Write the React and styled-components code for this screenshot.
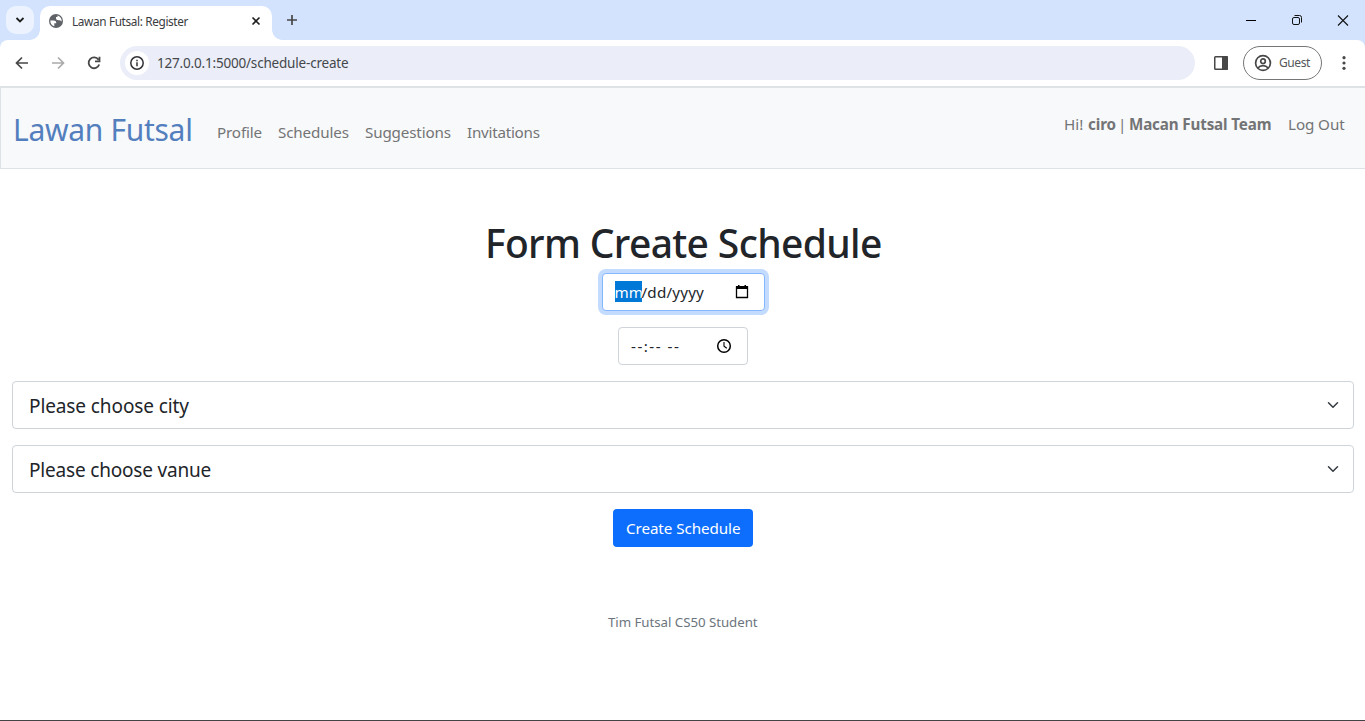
import React from "react";
import styled, { createGlobalStyle } from "styled-components";

const Global = createGlobalStyle`
  * { box-sizing: border-box; }
  html, body { margin: 0; background: #fff; overflow: hidden; }
  body { font-family: "Noto Sans", "Open Sans", sans-serif; color: #212529; }
  svg { display: block; flex: none; }
`;

const Window = styled.div`
  height: 721px;
  display: flex;
  flex-direction: column;
  border-bottom: 1px solid #424345;
  overflow: hidden;
`;

const Label = styled.span`
  display: block;
  flex: none;
  white-space: nowrap;
  width: ${(p) => p.$w}px;
  font-size: ${(p) => p.$size}px;
  font-weight: ${(p) => p.$weight || 400};
  letter-spacing: ${(p) => p.$ls || 0}px;
  line-height: ${(p) => p.$lh || 20}px;
  color: ${(p) => p.$color || "inherit"};
`;

const TabStrip = styled.div`
  height: 40px;
  flex: none;
  display: flex;
  background: #d3e3fd;
`;

const TabSearch = styled.div`
  width: 28px;
  height: 28px;
  margin: 6px 6px 0;
  border-radius: 10px;
  background: #ecf2fe;
  display: flex;
  align-items: center;
  justify-content: center;
`;

const Tab = styled.div`
  position: relative;
  width: 232px;
  height: 34px;
  margin-top: 6px;
  padding: 0 10px 5px 8px;
  border-radius: 10px 10px 0 0;
  background: #fff;
  display: flex;
  align-items: center;
  gap: 8px;
  &::before, &::after {
    content: "";
    position: absolute;
    bottom: 0;
    width: 10px;
    height: 10px;
  }
  &::before { left: -10px; background: radial-gradient(circle at 0 0, transparent 9.5px, #fff 10px); }
  &::after { right: -10px; background: radial-gradient(circle at 100% 0, transparent 9.5px, #fff 10px); }
`;

const TabClose = styled.div`
  margin-left: auto;
`;

const NewTab = styled.div`
  margin: 14px 0 0 14px;
`;

const WindowControls = styled.div`
  margin-left: auto;
  display: flex;
  & > svg { width: 46px; height: 40px; }
`;

const ToolbarBack = styled.div`
  flex: none;
  background: #d3e3fd;
`;

const Toolbar = styled.div`
  height: 46px;
  display: flex;
  align-items: center;
  background: #fff;
  border-radius: 8px 8px 0 0;
  padding-left: 4px;
`;

const ToolButton = styled.div`
  width: 36px;
  height: 34px;
  display: flex;
  align-items: center;
  justify-content: center;
`;

const AddressBar = styled.div`
  width: 1075px;
  height: 34px;
  margin-left: 8px;
  padding: 0 5px;
  border-radius: 17px;
  background: #ebeef8;
  display: flex;
  align-items: center;
  gap: 8px;
`;

const SiteInfo = styled.div`
  width: 24px;
  height: 24px;
  border-radius: 50%;
  background: #fff;
  display: flex;
  align-items: center;
  justify-content: center;
`;

const SidePanel = styled.div`
  margin-left: 17px;
`;

const GuestChip = styled.div`
  width: 79px;
  height: 34px;
  margin-left: 13px;
  padding-left: 10px;
  border: 1px solid #747775;
  border-radius: 17px;
  display: flex;
  align-items: center;
  gap: 7px;
`;

const MenuDots = styled.div`
  margin-left: 13px;
`;

const Divider = styled.div`
  height: 1px;
  flex: none;
  background: #dfe2e3;
`;

const Navbar = styled.nav`
  height: 82px;
  flex: none;
  display: flex;
  border: 1px solid #dee2e6;
  border-right: 0;
  background: #f8f9fa;
  color: #737476;
  padding-left: 12px;
`;

const Brand = styled.div`
  width: 204px;
  padding-top: 22px;
`;

const NavLinks = styled.div`
  display: flex;
  gap: 16px;
  padding-top: 32px;
`;

const NavUser = styled.div`
  display: flex;
  margin-left: auto;
  padding: 26px 19px 0 0;
`;

const Form = styled.main`
  flex: 1;
  display: flex;
  flex-direction: column;
  align-items: center;
  padding: 50px 11px 0 12px;
`;

const Title = styled.h1`
  margin: 0;
  height: 54px;
`;

const Field = styled.div`
  width: ${(p) => p.$width}px;
  height: 38px;
  margin-bottom: 16px;
  padding: 0 ${(p) => p.$right}px 0 12px;
  display: flex;
  align-items: center;
  justify-content: space-between;
  border: 1px solid ${(p) => (p.$focused ? "#86b7fe" : "#ced4da")};
  border-radius: 4px;
  background: #fff;
  box-shadow: ${(p) => (p.$focused ? "0 0 0 4px #c2dbff" : "none")};
`;

const DateText = styled.div`
  display: flex;
  margin-top: -1px;
  & > * { height: 21px; }
  span { line-height: 22px; }
`;

const Selected = styled.div`
  background: #0078d7;
  color: #fff;
`;

const Select = styled.div`
  align-self: stretch;
  height: 48px;
  margin-bottom: 16px;
  padding: 0 14px 0 16px;
  display: flex;
  align-items: center;
  justify-content: space-between;
  border: 1px solid #ced4da;
  border-radius: 4px;
  & > span { padding-top: 1px; }
`;

const Submit = styled.button`
  width: 140px;
  height: 38px;
  padding: 0 0 0 13px;
  border: 0;
  border-radius: 4px;
  background: #0d6efd;
  color: #fff;
  font-family: inherit;
  text-align: left;
`;

const Footer = styled.footer`
  margin-top: 65px;
`;

const Chevron = () => (
  <svg width="12" height="12" viewBox="0 0 16 16" fill="none" stroke="#343a40" strokeWidth="2" strokeLinecap="round" strokeLinejoin="round">
    <path d="m2 5 6 6 6-6" />
  </svg>
);

const Globe = () => (
  <svg width="16" height="16" viewBox="0 0 16 16">
    <circle cx="8" cy="8" r="7" fill="#5f6368" />
    <path d="M2.3 7.5h3.2c1.8 0 2.7.8 2.7 2.1v.7H6.3v3C3.8 12.600 2.200 10.300 2.300 7.500ZM9.500 2.600c2.500.6 4.200 2.800 4.200 5.400v.5c-.8-.9-1.700-1.300-3-1.300-1.900 0-2.700-.7-2.700-2.200V4h1.500Z" fill="#fff" />
  </svg>
);

const Arrow = ({ color, flip }) => (
  <svg width="14" height="14" viewBox="0 0 14 14" fill="none" stroke={color} strokeWidth="1.7">
    <path d={flip ? "M1 7h11M7 1.500 12.500 7 7 12.500" : "M13 7H2M7 1.500 1.500 7 7 12.500"} />
  </svg>
);

export default function App() {
  return (
    <>
      <Global />
      <Window>
        <TabStrip>
          <TabSearch>
            <svg width="10" height="8" fill="none" stroke="#1f1f1f" strokeWidth="1.8"><path d="m1.500 2 3.500 3.500L8.500 2" /></svg>
          </TabSearch>
          <Tab>
            <Globe />
            <Label $w={118} $size={11.8} $ls={-0.36} $color="#3a3c40">Lawan Futsal: Register</Label>
            <TabClose>
              <svg width="12" height="12" fill="none" stroke="#1f1f1f" strokeWidth="1.6"><path d="m2.500 2.500 7 7m0-7-7 7" /></svg>
            </TabClose>
          </Tab>
          <NewTab>
            <svg width="12" height="12" fill="none" stroke="#474747" strokeWidth="1.700"><path d="M6 1v10M1 6h10" /></svg>
          </NewTab>
          <WindowControls>
            <svg viewBox="0 0 46 40" stroke="#000"><path d="M19 20.500h10" /></svg>
            <svg viewBox="0 0 46 40" fill="none" stroke="#111"><rect x="19.500" y="17.500" width="7" height="7" rx="1.500" /><path d="M21.500 15.500h5a2 2 0 0 1 2 2v5" /></svg>
            <svg viewBox="0 0 46 40" fill="none" stroke="#111" strokeWidth="1.100"><path d="m19 15.500 10 10m0-10-10 10" /></svg>
          </WindowControls>
        </TabStrip>
        <ToolbarBack>
          <Toolbar>
            <ToolButton><Arrow color="#474747" /></ToolButton>
            <ToolButton><Arrow color="#aaa" flip /></ToolButton>
            <ToolButton>
              <svg width="14" height="14" viewBox="0 0 14 14" fill="none" stroke="#474747" strokeWidth="1.800"><path d="M11.500 3.700A5.400 5.400 0 1 0 12.200 8.500M12.500.800v4.500H8" /></svg>
            </ToolButton>
            <AddressBar>
              <SiteInfo>
                <svg width="14" height="14" viewBox="0 0 14 14" fill="none" stroke="#303236" strokeWidth="1.500"><circle cx="7" cy="7" r="6.200" /><path d="M7 6.300V10.200M7 3.700v1.500" /></svg>
              </SiteInfo>
              <Label $w={200} $size={13.500} $ls={-0.19} $color="#44474c">127.0.0.1:5000/schedule-create</Label>
            </AddressBar>
            <SidePanel>
              <svg width="18" height="16" viewBox="0 0 18 16"><rect x="2.750" y="1.750" width="12.500" height="12.500" rx="0.800" fill="none" stroke="#474747" strokeWidth="1.500" /><path d="M10 1h5a1 1 0 0 1 1 1v12a1 1 0 0 1-1 1h-5Z" fill="#474747" /></svg>
            </SidePanel>
            <GuestChip>
              <svg width="18" height="18" viewBox="0 0 18 18" fill="none" stroke="#474747" strokeWidth="1.700"><circle cx="9" cy="9" r="7.400" /><circle cx="9" cy="7.200" r="2.300" /><path d="M3.800 14c1.300-1.500 3-2.300 5.200-2.300s3.900.8 5.200 2.300" /></svg>
              <Label $w={32} $size={12} $ls={-0.4} $color="#55575a">Guest</Label>
            </GuestChip>
            <MenuDots>
              <svg width="18" height="16" fill="#474747"><circle cx="9" cy="2.700" r="1.600" /><circle cx="9" cy="8" r="1.600" /><circle cx="9" cy="13.300" r="1.600" /></svg>
            </MenuDots>
          </Toolbar>
        </ToolbarBack>
        <Divider />
        <Navbar>
          <Brand><Label $w={178} $size={30} $ls={-0.3} $lh={40} $color="#537fbe">Lawan Futsal</Label></Brand>
          <NavLinks>
            <Label $w={45} $size={15.200} $ls={-0.15} $lh={24}>Profile</Label>
            <Label $w={71} $size={15.200} $ls={-0.13} $lh={24}>Schedules</Label>
            <Label $w={86} $size={15.200} $ls={-0.15} $lh={24}>Suggestions</Label>
            <Label $w={73} $size={15.200} $ls={-0.25} $lh={24}>Invitations</Label>
          </NavLinks>
          <NavUser>
            <Label $w={24} $size={15.200}>Hi!</Label>
            <Label $w={30} $size={15.200} $ls={-0.1} $weight={700}>ciro</Label>
            <Label $w={11} $size={15.200}>|</Label>
            <Label $w={159} $size={15.200} $ls={-0.15} $weight={700}>Macan Futsal Team</Label>
            <Label $w={58} $size={15.200} $ls={-0.08}>Log Out</Label>
          </NavUser>
        </Navbar>
        <Form>
          <Title><Label $w={396} $size={39} $ls={-0.65} $weight={500} $lh={48}>Form Create Schedule</Label></Title>
          <Field $width={163} $right={15} $focused>
            <DateText>
              <Selected><Label $w={27} $size={15.200}>mm</Label></Selected>
              <Label $w={64} $size={15.200} $ls={0.2}>/dd/yyyy</Label>
            </DateText>
            <svg width="14" height="16" viewBox="0 0 14 16"><path d="M1.500 3h11v10.500h-11Z" fill="none" stroke="#000" strokeWidth="1.300" /><path d="M1 2h12v3H1ZM3 1h1.500v2H3ZM9.500 1H11v2H9.500Z" /></svg>
          </Field>
          <Field $width={130} $right={15}>
            <Label $w={50} $size={15.200} $ls={1.5}>--:-- --</Label>
            <svg width="16" height="16" viewBox="0 0 16 16" fill="none" stroke="#000" strokeWidth="1.500"><circle cx="8" cy="8" r="6.300" /><path d="M8 4v4.200l2.800 2" strokeWidth="1.100" /></svg>
          </Field>
          <Select><Label $w={161} $size={19} $ls={-0.1} $lh={30}>Please choose city</Label><Chevron /></Select>
          <Select><Label $w={183} $size={19} $ls={-0.19} $lh={30}>Please choose vanue</Label><Chevron /></Select>
          <Submit><Label $w={115} $size={15.200} $ls={-0.07} $lh={24}>Create Schedule</Label></Submit>
          <Footer><Label $w={150} $size={13.300} $ls={-0.05} $color="#6c757d">Tim Futsal CS50 Student</Label></Footer>
        </Form>
      </Window>
    </>
  );
}
